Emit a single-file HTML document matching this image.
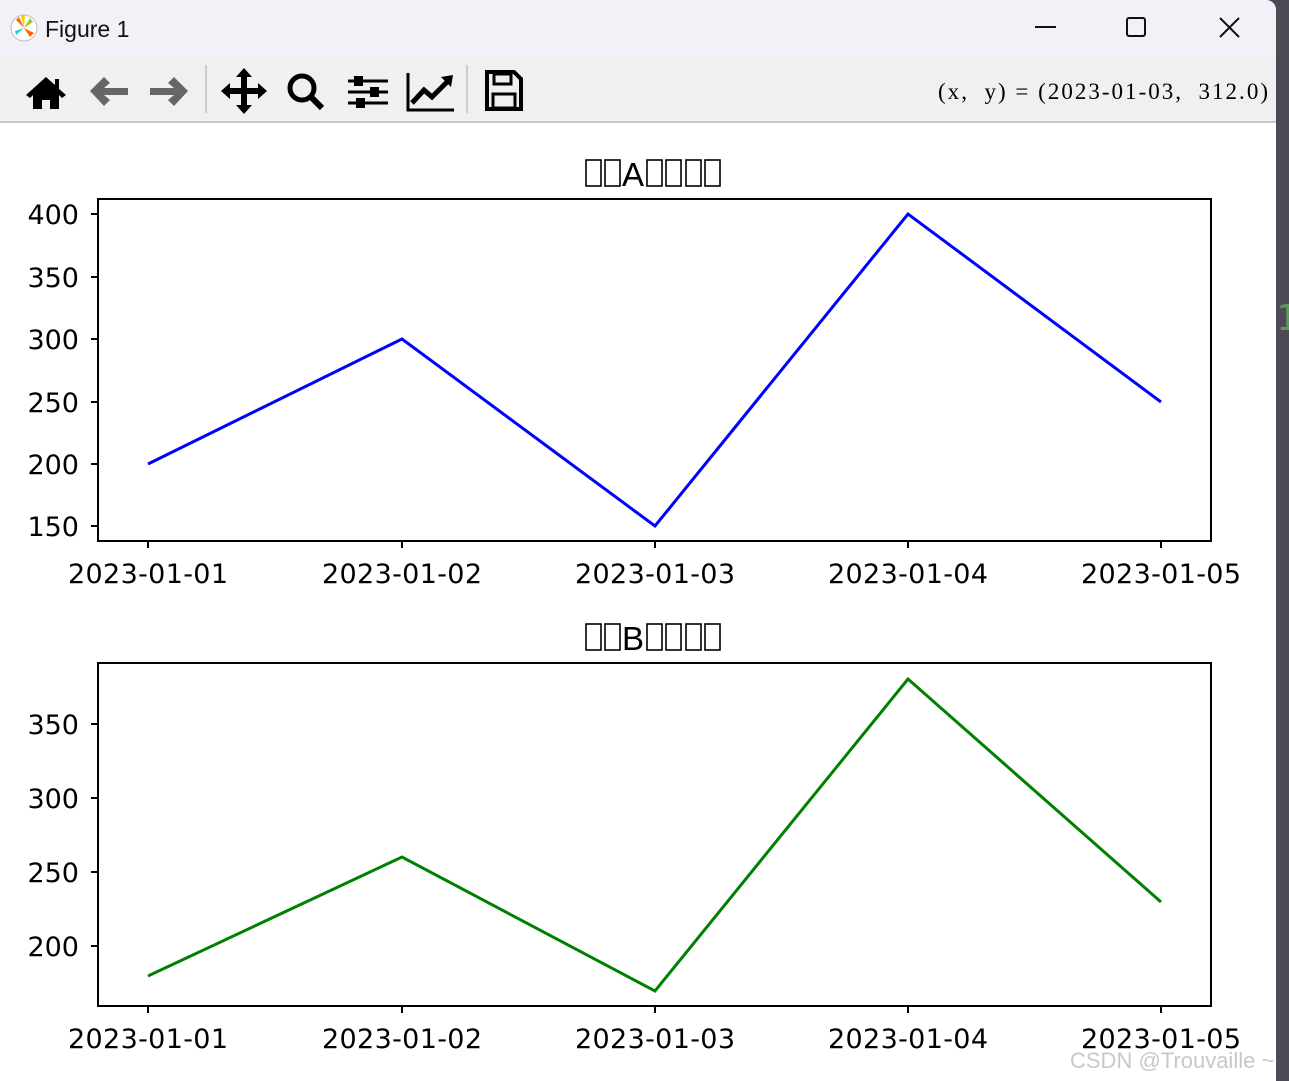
<!DOCTYPE html>
<html><head><meta charset="utf-8"><style>
body{margin:0;width:1289px;height:1081px;background:#4d4a55;overflow:hidden;font-family:"Liberation Sans","DejaVu Sans",sans-serif;position:relative}
#win{position:absolute;left:0;top:0;width:1276px;height:1081px;background:#fff;border-top-right-radius:10px;overflow:hidden}
#title{position:absolute;left:0;top:0;width:1276px;height:57px;background:#f3f1f7}
#tb{position:absolute;left:0;top:57px;width:1276px;height:64px;background:#f0f0f0;border-bottom:2px solid #c8c8c8}
</style></head><body>
<div id="win">
<div id="title">
<svg width="1276" height="57" style="position:absolute;left:0;top:0">
<circle cx="24" cy="28" r="13" fill="#fff" stroke="#bbb"/>
<path d="M24 28 L16 20 L19 17Z" fill="#f60"/><path d="M24 28 L33 22 L30 18Z" fill="#9c3"/><path d="M24 28 L30 37 L34 33Z" fill="#f60"/><path d="M24 28 L15 31 L16 35Z" fill="#3cc"/><path d="M24 28 L21 16 L25 15Z" fill="#fc0"/>
<text x="45" y="37" font-size="23" fill="#111" font-family="Liberation Sans, sans-serif">Figure 1</text>
<line x1="1035" y1="27" x2="1056" y2="27" stroke="#111" stroke-width="2"/>
<rect x="1127" y="18" width="18" height="18" rx="2" fill="none" stroke="#111" stroke-width="2"/>
<path d="M1220 18 L1239 37 M1239 18 L1220 37" stroke="#111" stroke-width="2"/>
</svg>
</div>
<div id="tb">
<svg width="1276" height="64" style="position:absolute;left:0;top:0">
<path d="M46 20 L26 38 L30 41 L33 38 L33 52 L42 52 L42 43 L50 43 L50 52 L59 52 L59 38 L62 41 L66 38 L59 32 L59 22 L55 22 L55 28Z" fill="#000"/>
<path d="M90 34 L104 20 L110 26 L104 31 L128 31 L128 38 L104 38 L110 43 L104 49Z" fill="#666"/>
<path d="M188 34 L174 20 L168 26 L174 31 L150 31 L150 38 L174 38 L168 43 L174 49Z" fill="#666"/>
<line x1="206" y1="8" x2="206" y2="56" stroke="#ccc" stroke-width="2"/>
<path d="M244 11 L252 20 L247 20 L247 31 L258 31 L258 26 L267 34 L258 42 L258 37 L247 37 L247 48 L252 48 L244 57 L236 48 L241 48 L241 37 L230 37 L230 42 L221 34 L230 26 L230 31 L241 31 L241 20 L236 20Z" fill="#000"/>
<circle cx="302" cy="31" r="12" fill="none" stroke="#000" stroke-width="5"/>
<line x1="311" y1="40" x2="322" y2="51" stroke="#000" stroke-width="6"/>
<g stroke="#000" stroke-width="3"><line x1="348" y1="24" x2="388" y2="24"/><line x1="348" y1="35" x2="388" y2="35"/><line x1="348" y1="46" x2="388" y2="46"/></g>
<g fill="#000"><rect x="354" y="19" width="9" height="10"/><rect x="370" y="30" width="9" height="10"/><rect x="356" y="41" width="9" height="10"/></g>
<path d="M408 16 L408 53 L454 53" fill="none" stroke="#000" stroke-width="3"/>
<path d="M412 46 L424 33 L432 40 L448 24" fill="none" stroke="#000" stroke-width="5"/>
<path d="M441 20 L453 18 L451 30Z" fill="#000"/>
<line x1="467" y1="8" x2="467" y2="56" stroke="#ccc" stroke-width="2"/>
<path d="M487 15 L514 15 L521 22 L521 52 L487 52Z" fill="none" stroke="#000" stroke-width="4"/>
<rect x="494" y="17" width="17" height="10" fill="none" stroke="#000" stroke-width="3"/>
<rect x="493" y="37" width="22" height="14" fill="none" stroke="#000" stroke-width="3"/>
<text x="938" y="42" font-size="23" font-family="Liberation Serif, serif" fill="#000" textLength="330" lengthAdjust="spacing" xml:space="preserve">(x,  y) = (2023-01-03,  312.0)</text>
</svg>
</div>
<svg width="1276" height="960" viewBox="0 121 1276 960" style="position:absolute;left:0;top:121px" font-family="DejaVu Sans, Liberation Sans, sans-serif" font-size="27">
<g fill="none" stroke="#000" stroke-width="1.6">
<rect x="586" y="160" width="15" height="26"/><rect x="605" y="160" width="15" height="26"/>
<rect x="647" y="160" width="15" height="26"/><rect x="666" y="160" width="15" height="26"/><rect x="686" y="160" width="15" height="26"/><rect x="705" y="160" width="15" height="26"/>
<rect x="586" y="624" width="15" height="26"/><rect x="605" y="624" width="15" height="26"/>
<rect x="647" y="624" width="15" height="26"/><rect x="666" y="624" width="15" height="26"/><rect x="686" y="624" width="15" height="26"/><rect x="705" y="624" width="15" height="26"/>
</g>
<text x="622" y="186" font-size="33" font-family="Liberation Sans, sans-serif">A</text>
<text x="622" y="650" font-size="33" font-family="Liberation Sans, sans-serif">B</text>
<rect x="98" y="199" width="1113" height="342" fill="none" stroke="#000" stroke-width="2"/>
<rect x="98" y="663" width="1113" height="343" fill="none" stroke="#000" stroke-width="2"/>
<polyline points="148,464 402,339 655,526 908,214 1161,402" fill="none" stroke="#0000ff" stroke-width="3"/>
<polyline points="148,976 402,857 655,991 908,679 1161,902" fill="none" stroke="#008000" stroke-width="3"/>
<g stroke="#000" stroke-width="2">
<line x1="91" y1="214" x2="98" y2="214"/><line x1="91" y1="277" x2="98" y2="277"/><line x1="91" y1="339" x2="98" y2="339"/><line x1="91" y1="402" x2="98" y2="402"/><line x1="91" y1="464" x2="98" y2="464"/><line x1="91" y1="526" x2="98" y2="526"/>
<line x1="91" y1="724" x2="98" y2="724"/><line x1="91" y1="798" x2="98" y2="798"/><line x1="91" y1="872" x2="98" y2="872"/><line x1="91" y1="946" x2="98" y2="946"/>
<line x1="148" y1="541" x2="148" y2="548"/><line x1="402" y1="541" x2="402" y2="548"/><line x1="655" y1="541" x2="655" y2="548"/><line x1="908" y1="541" x2="908" y2="548"/><line x1="1161" y1="541" x2="1161" y2="548"/>
<line x1="148" y1="1006" x2="148" y2="1013"/><line x1="402" y1="1006" x2="402" y2="1013"/><line x1="655" y1="1006" x2="655" y2="1013"/><line x1="908" y1="1006" x2="908" y2="1013"/><line x1="1161" y1="1006" x2="1161" y2="1013"/>
</g>
<g text-anchor="end">
<text x="79" y="224">400</text><text x="79" y="287">350</text><text x="79" y="349">300</text><text x="79" y="412">250</text><text x="79" y="474">200</text><text x="79" y="536">150</text>
<text x="79" y="734">350</text><text x="79" y="808">300</text><text x="79" y="882">250</text><text x="79" y="956">200</text>
</g>
<g text-anchor="middle">
<text x="148" y="583" textLength="160">2023-01-01</text><text x="402" y="583" textLength="160">2023-01-02</text><text x="655" y="583" textLength="160">2023-01-03</text><text x="908" y="583" textLength="160">2023-01-04</text><text x="1161" y="583" textLength="160">2023-01-05</text>
<text x="148" y="1048" textLength="160">2023-01-01</text><text x="402" y="1048" textLength="160">2023-01-02</text><text x="655" y="1048" textLength="160">2023-01-03</text><text x="908" y="1048" textLength="160">2023-01-04</text><text x="1161" y="1048" textLength="160">2023-01-05</text>
</g>
<text x="1070" y="1068" font-size="22" fill="#c8c8c8" font-family="Liberation Sans, sans-serif">CSDN @Trouvaille ~</text>
</svg>
</div>
<div style="position:absolute;left:1276px;top:298px;color:#5a9a5a;font-size:36px;font-family:'DejaVu Sans Mono',monospace">1</div>
</body></html>
